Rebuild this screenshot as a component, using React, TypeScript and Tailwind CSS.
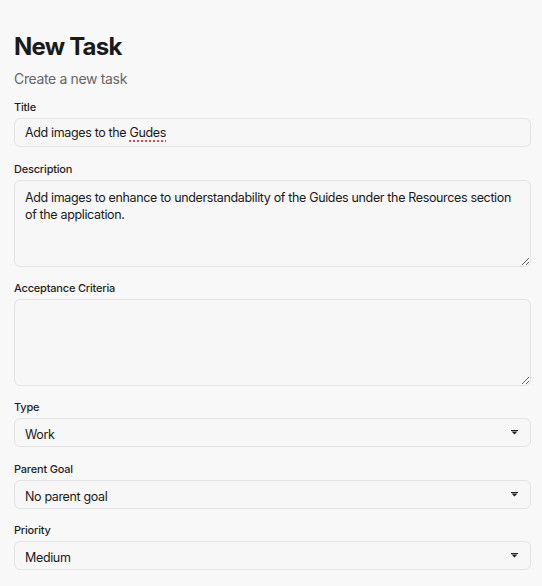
import React from "react";

const font = { fontFamily: "Inter, 'Noto Sans', sans-serif" };

function Label({ children }: { children: React.ReactNode }) {
  return (
    <label className="block text-[11px] leading-[14px] font-medium tracking-[-0.2px] text-[#1f1f1f] mb-[4px]">
      {children}
    </label>
  );
}

function Select({ value, options }: { value: string; options: string[] }) {
  return (
    <div className="relative">
      <select
        defaultValue={value}
        className="block w-full h-[29px] appearance-none rounded-[6px] border border-[#e3e3e3] bg-[#f7f7f7] pl-[10px] pr-[30px] pt-[3px] pb-0 leading-[17px] text-[12.5px] tracking-[-0.35px] text-[#1a1a1a] outline-none"
        style={font}
      >
        {options.map((o) => (
          <option key={o}>{o}</option>
        ))}
      </select>
      <svg
        className="pointer-events-none absolute right-[13px] top-[12px]"
        width="7"
        height="5"
        viewBox="0 0 7 5"
      >
        <rect x="0" y="0" width="7" height="1" fill="#222" />
        <path d="M0.5 1.5 H6.5 L3.5 4.5 Z" fill="#222" />
      </svg>
    </div>
  );
}

export default function App() {
  return (
    <div className="min-h-screen bg-[#f8f8f8]" style={font}>
      <div className="w-[517px] ml-[14px] pt-[31px]">
        <h1 className="text-[24px] leading-[32px] font-bold tracking-[-0.8px] text-[#1a1a1a]">
          New Task
        </h1>
        <p className="mt-[6px] text-[14px] leading-[20px] tracking-[-0.35px] text-[#666666]">
          Create a new task
        </p>

        <div className="mt-[11px]">
          <Label>Title</Label>
          <div className="h-[29px] rounded-[6px] border border-[#e3e3e3] bg-[#f7f7f7] pl-[10px] pt-[2px] flex items-center text-[12.5px] tracking-[-0.35px] text-[#1a1a1a]">
            <span>
              Add images to the{" "}
              <span className="underline decoration-dotted decoration-[#e5484d] decoration-[1.5px] underline-offset-[3px]">
                Gudes
              </span>
            </span>
          </div>
        </div>

        <div className="mt-[15px]">
          <Label>Description</Label>
          <textarea
            className="block w-full h-[87px] rounded-[6px] border border-[#e3e3e3] bg-[#f7f7f7] px-[10px] pt-[8px] text-[12.5px] leading-[17px] tracking-[-0.35px] text-[#1a1a1a] outline-none"
            style={font}
            defaultValue="Add images to enhance to understandability of the Guides under the Resources section of the application."
          />
        </div>

        <div className="mt-[14px]">
          <Label>Acceptance Criteria</Label>
          <textarea
            className="block w-full h-[87px] rounded-[6px] border border-[#e3e3e3] bg-[#f7f7f7] px-[10px] pt-[8px] text-[12.5px] leading-[17px] tracking-[-0.35px] text-[#1a1a1a] outline-none"
            style={font}
          />
        </div>

        <div className="mt-[14px]">
          <Label>Type</Label>
          <Select value="Work" options={["Work", "Personal"]} />
        </div>

        <div className="mt-[15px]">
          <Label>Parent Goal</Label>
          <Select value="No parent goal" options={["No parent goal"]} />
        </div>

        <div className="mt-[14px]">
          <Label>Priority</Label>
          <Select value="Medium" options={["Low", "Medium", "High"]} />
        </div>
      </div>
    </div>
  );
}
